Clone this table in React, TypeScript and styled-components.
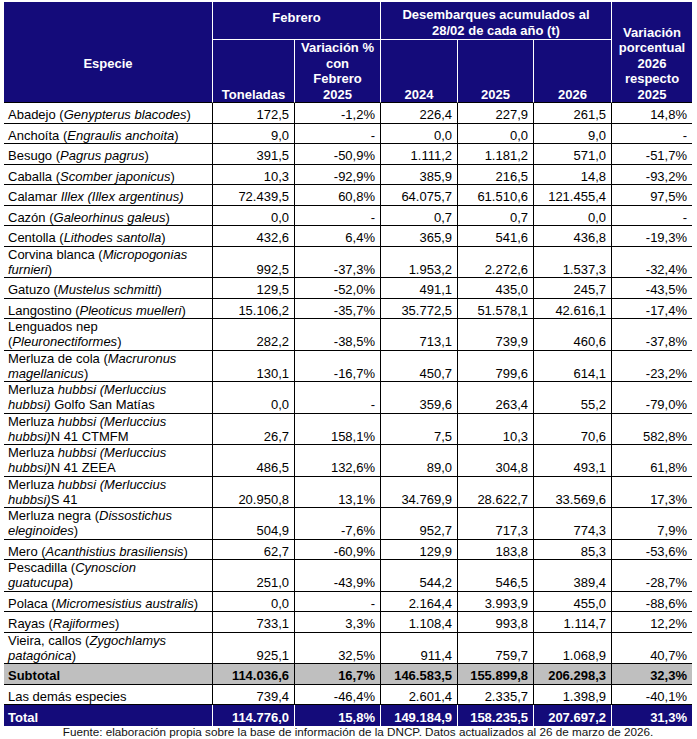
import React from "react";
import styled, { createGlobalStyle, css } from "styled-components";

const NAVY = "#140b7a";

const GlobalStyle = createGlobalStyle`
  html, body { margin: 0; padding: 0; background: #ffffff; }
  body { font-family: "Liberation Sans", Arial, sans-serif; color: #000; }
`;

const Page = styled.div`
  width: 697px;
  box-sizing: border-box;
  padding: 2px 5px 0 4px;
`;

const Table = styled.table`
  width: 688px;
  border-collapse: separate;
  border-spacing: 0;
  table-layout: fixed;
  font-size: 13px;
`;

const HeadCell = styled.th<{ $align?: "top" | "middle" | "bottom"; $last?: boolean; $bottomDark?: boolean; $pt?: number; $pb?: number }>`
  background: ${NAVY};
  color: #ffffff;
  font-weight: bold;
  text-align: center;
  line-height: 15.5px;
  padding: ${(p) => p.$pt ?? 0}px 2px ${(p) => p.$pb ?? 0}px;
  vertical-align: ${(p) => p.$align ?? "bottom"};
  border-right: ${(p) => (p.$last ? "none" : "1px solid #ffffff")};
  border-bottom: 1px solid ${(p) => (p.$bottomDark ? "#000000" : "#ffffff")};
`;

const Row = styled.tr<{ $tall?: boolean }>`
  height: ${(p) => (p.$tall ? "31.5px" : "20.5px")};
`;

const Cell = styled.td<{ $kind?: "plain" | "sub" | "total"; $num?: boolean; $last?: boolean }>`
  line-height: 15.25px;
  padding: 0 ${(p) => (p.$num ? "5px" : "2px")} 0 ${(p) => (p.$num ? "2px" : "4px")};
  vertical-align: bottom;
  text-align: ${(p) => (p.$num ? "right" : "left")};
  white-space: nowrap;
  border-bottom: 1px solid #000000;
  border-right: ${(p) => (p.$last ? "none" : "1px solid #000000")};
  ${(p) =>
    p.$kind === "sub" &&
    css`
      background: #bfbfbf;
      font-weight: bold;
    `}
  ${(p) =>
    p.$kind === "total" &&
    css`
      background: ${NAVY};
      color: #ffffff;
      font-weight: bold;
      border-bottom: none;
      border-right: ${p.$last ? "none" : "1px solid #ffffff"};
    `}
`;

const Sci = styled.i`
  font-style: italic;
`;

const Source = styled.div`
  width: 688px;
  box-sizing: border-box;
  padding: 0 0 0 20px;
  text-align: center;
  font-size: 11.7px;
  line-height: 12px;
  color: #111111;
`;

type Species = {
  name: React.ReactNode;
  tall?: boolean;
  v: string[];
};

const rows: Species[] = [
  { name: <>Abadejo (<Sci>Genypterus blacodes</Sci>)</>, v: ["172,5", "-1,2%", "226,4", "227,9", "261,5", "14,8%"] },
  { name: <>Anchoíta (<Sci>Engraulis anchoita</Sci>)</>, v: ["9,0", "-", "0,0", "0,0", "9,0", "-"] },
  { name: <>Besugo (<Sci>Pagrus pagrus</Sci>)</>, v: ["391,5", "-50,9%", "1.111,2", "1.181,2", "571,0", "-51,7%"] },
  { name: <>Caballa (<Sci>Scomber japonicus</Sci>)</>, v: ["10,3", "-92,9%", "385,9", "216,5", "14,8", "-93,2%"] },
  { name: <>Calamar <Sci>Illex (Illex argentinus)</Sci></>, v: ["72.439,5", "60,8%", "64.075,7", "61.510,6", "121.455,4", "97,5%"] },
  { name: <>Cazón (<Sci>Galeorhinus galeus</Sci>)</>, v: ["0,0", "-", "0,7", "0,7", "0,0", "-"] },
  { name: <>Centolla (<Sci>Lithodes santolla</Sci>)</>, v: ["432,6", "6,4%", "365,9", "541,6", "436,8", "-19,3%"] },
  { name: <>Corvina blanca (<Sci>Micropogonias</Sci><br /><Sci>furnieri</Sci>)</>, tall: true, v: ["992,5", "-37,3%", "1.953,2", "2.272,6", "1.537,3", "-32,4%"] },
  { name: <>Gatuzo (<Sci>Mustelus schmitti</Sci>)</>, v: ["129,5", "-52,0%", "491,1", "435,0", "245,7", "-43,5%"] },
  { name: <>Langostino (<Sci>Pleoticus muelleri</Sci>)</>, v: ["15.106,2", "-35,7%", "35.772,5", "51.578,1", "42.616,1", "-17,4%"] },
  { name: <>Lenguados nep<br />(<Sci>Pleuronectiformes</Sci>)</>, tall: true, v: ["282,2", "-38,5%", "713,1", "739,9", "460,6", "-37,8%"] },
  { name: <>Merluza de cola (<Sci>Macruronus</Sci><br /><Sci>magellanicus</Sci>)</>, tall: true, v: ["130,1", "-16,7%", "450,7", "799,6", "614,1", "-23,2%"] },
  { name: <>Merluza <Sci>hubbsi (Merluccius</Sci><br /><Sci>hubbsi)</Sci> Golfo San Matías</>, tall: true, v: ["0,0", "-", "359,6", "263,4", "55,2", "-79,0%"] },
  { name: <>Merluza <Sci>hubbsi (Merluccius</Sci><br /><Sci>hubbsi)</Sci>N 41 CTMFM</>, tall: true, v: ["26,7", "158,1%", "7,5", "10,3", "70,6", "582,8%"] },
  { name: <>Merluza <Sci>hubbsi (Merluccius</Sci><br /><Sci>hubbsi)</Sci>N 41 ZEEA</>, tall: true, v: ["486,5", "132,6%", "89,0", "304,8", "493,1", "61,8%"] },
  { name: <>Merluza <Sci>hubbsi (Merluccius</Sci><br /><Sci>hubbsi)</Sci>S 41</>, tall: true, v: ["20.950,8", "13,1%", "34.769,9", "28.622,7", "33.569,6", "17,3%"] },
  { name: <>Merluza negra (<Sci>Dissostichus</Sci><br /><Sci>eleginoides</Sci>)</>, tall: true, v: ["504,9", "-7,6%", "952,7", "717,3", "774,3", "7,9%"] },
  { name: <>Mero (<Sci>Acanthistius brasiliensis</Sci>)</>, v: ["62,7", "-60,9%", "129,9", "183,8", "85,3", "-53,6%"] },
  { name: <>Pescadilla (<Sci>Cynoscion</Sci><br /><Sci>guatucupa</Sci>)</>, tall: true, v: ["251,0", "-43,9%", "544,2", "546,5", "389,4", "-28,7%"] },
  { name: <>Polaca (<Sci>Micromesistius australis</Sci>)</>, v: ["0,0", "-", "2.164,4", "3.993,9", "455,0", "-88,6%"] },
  { name: <>Rayas (<Sci>Rajiformes</Sci>)</>, v: ["733,1", "3,3%", "1.108,4", "993,8", "1.114,7", "12,2%"] },
  { name: <>Vieira, callos (<Sci>Zygochlamys</Sci><br /><Sci>patagónica</Sci>)</>, tall: true, v: ["925,1", "32,5%", "911,4", "759,7", "1.068,9", "40,7%"] },
];

const summary: { name: string; kind: "sub" | "plain" | "total"; v: string[] }[] = [
  { name: "Subtotal", kind: "sub", v: ["114.036,6", "16,7%", "146.583,5", "155.899,8", "206.298,3", "32,3%"] },
  { name: "Las demás especies", kind: "plain", v: ["739,4", "-46,4%", "2.601,4", "2.335,7", "1.398,9", "-40,1%"] },
  { name: "Total", kind: "total", v: ["114.776,0", "15,8%", "149.184,9", "158.235,5", "207.697,2", "31,3%"] },
];

const widths = [209, 82, 86, 77, 76, 78, 80];

export default function App() {
  return (
    <>
      <GlobalStyle />
      <Page>
        <Table>
          <colgroup>
            {widths.map((w, i) => (
              <col key={i} style={{ width: w }} />
            ))}
          </colgroup>
          <thead>
            <tr style={{ height: 38 }}>
              <HeadCell rowSpan={2} $align="middle" $pt={24} $bottomDark>
                Especie
              </HeadCell>
              <HeadCell colSpan={2} $align="middle" $pb={6}>
                Febrero
              </HeadCell>
              <HeadCell colSpan={3} $align="bottom" $pb={1}>
                Desembarques acumulados al
                <br />
                28/02 de cada año (t)
              </HeadCell>
              <HeadCell rowSpan={2} $last $bottomDark>
                Variación
                <br />
                porcentual
                <br />
                2026
                <br />
                respecto
                <br />
                2025
              </HeadCell>
            </tr>
            <tr style={{ height: 63 }}>
              <HeadCell $bottomDark>Toneladas</HeadCell>
              <HeadCell $bottomDark>
                Variación %
                <br />
                con
                <br />
                Febrero
                <br />
                2025
              </HeadCell>
              <HeadCell $bottomDark>2024</HeadCell>
              <HeadCell $bottomDark>2025</HeadCell>
              <HeadCell $bottomDark>2026</HeadCell>
            </tr>
          </thead>
          <tbody>
            {rows.map((r, i) => (
              <Row key={i} $tall={r.tall}>
                <Cell>{r.name}</Cell>
                {r.v.map((val, j) => (
                  <Cell key={j} $num $last={j === r.v.length - 1}>
                    {val}
                  </Cell>
                ))}
              </Row>
            ))}
            {summary.map((r, i) => (
              <Row key={`s${i}`}>
                <Cell $kind={r.kind}>{r.name}</Cell>
                {r.v.map((val, j) => (
                  <Cell key={j} $num $kind={r.kind} $last={j === r.v.length - 1}>
                    {val}
                  </Cell>
                ))}
              </Row>
            ))}
          </tbody>
        </Table>
        <Source>
          Fuente: elaboración propia sobre la base de información de la DNCP. Datos actualizados al 26 de marzo de 2026.
        </Source>
      </Page>
    </>
  );
}
